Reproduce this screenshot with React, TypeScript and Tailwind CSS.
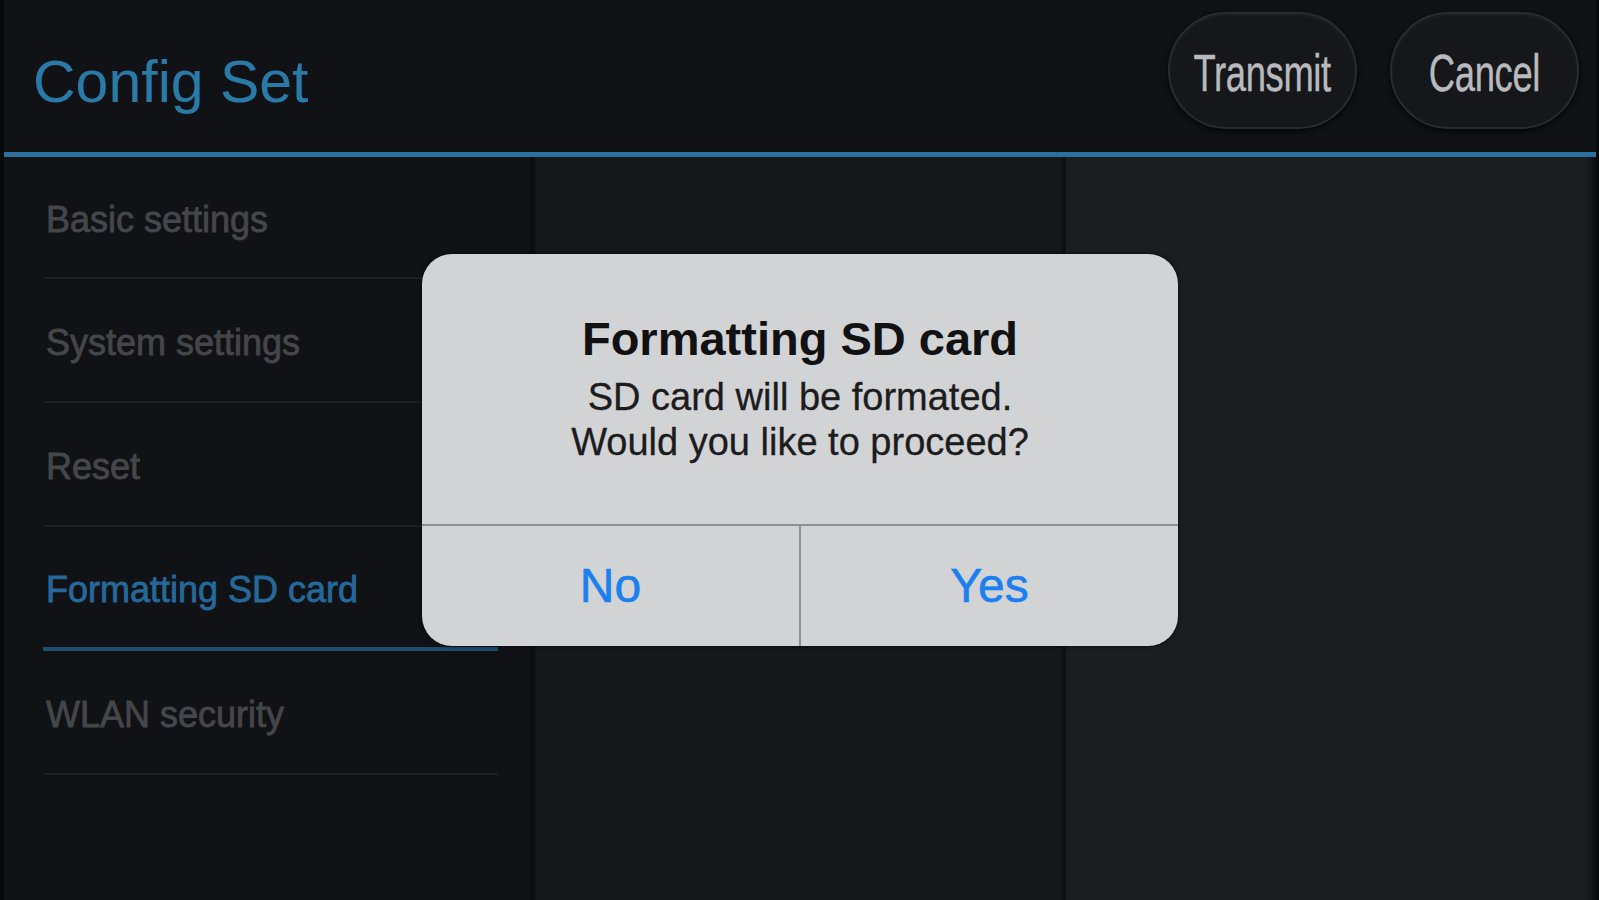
import React from "react";

const items = [
  { label: "Basic settings", active: false },
  { label: "System settings", active: false },
  { label: "Reset", active: false },
  { label: "Formatting SD card", active: true },
  { label: "WLAN security", active: false },
];

function PillButton({ label }: { label: string }) {
  return (
    <div className="w-[189px] h-[117px] rounded-full bg-[#16171b] border-2 border-[#2a2b30] shadow-[0_2px_6px_rgba(0,0,0,0.8),inset_0_2px_3px_rgba(255,255,255,0.04)] flex items-center justify-center">
      <span className="inline-block scale-x-[0.7] text-[52px] leading-none text-[#b9babd] tracking-[-0.5px] mt-[4px] [-webkit-text-stroke:0.4px_#b9babd]">
        {label}
      </span>
    </div>
  );
}

export default function App() {
  return (
    <div className="relative w-[1599px] h-[900px] overflow-hidden bg-[#111216] flex font-['Liberation_Sans',Arial,sans-serif]">
      <div className="w-[4px] h-full bg-[#08090b]" />
      <div className="flex-1 flex flex-col min-w-0">
        <header className="h-[152px] flex items-start justify-between pt-[12px] pl-[29px] pr-[17px]">
          <h1 className="mt-[41px] text-[59px] leading-none text-[#2a7aa8]">Config Set</h1>
          <div className="flex gap-[33px]">
            <PillButton label="Transmit" />
            <PillButton label="Cancel" />
          </div>
        </header>
        <div className="h-[5px] bg-[#2a70a0]" />
        <div className="flex-1 flex">
          <div className="w-[526px] bg-[#111216] pl-[39px]">
            <ul className="w-[455px]">
              {items.map((it, i) => (
                <li
                  key={it.label}
                  className={
                    (i === 0 ? "h-[122px] " : "h-[124px] ") +
                    (it.active
                      ? "box-border border-b-4 border-[#1e4d6e] flex items-center pt-[6px]"
                      : "box-border border-b-2 border-[#1e1f24] flex items-center pt-[6px]")
                  }
                >
                  <span
                    className={
                      it.active
                        ? "pl-[3px] text-[36px] text-[#25699a] [-webkit-text-stroke:0.8px_#25699a]"
                        : "pl-[3px] text-[36px] text-[#45464a] [-webkit-text-stroke:0.8px_#45464a]"
                    }
                  >
                    {it.label}
                  </span>
                </li>
              ))}
            </ul>
          </div>
          <div className="w-[532px] border-l-[5px] border-[#0d0e11] bg-[#16171b]" />
          <div className="flex-1 border-l-[4px] border-[#0f1013] bg-[linear-gradient(to_right,#1c1d21_calc(100%-10px),#0c0d0f)]" />
        </div>
      </div>
      <div className="w-[3px] h-full bg-[#08090b]" />

      <div className="absolute left-[422px] top-[254px] w-[756px] h-[392px] rounded-[30px] bg-[#d2d3d5] shadow-[0_0_4px_rgba(0,0,0,0.7)] flex flex-col overflow-hidden">
        <div className="h-[270px] flex flex-col items-center pt-[57px]">
          <div className="text-[47px] leading-[56px] font-bold text-[#111113]">Formatting SD card</div>
          <div className="mt-[8px] text-[38px] leading-[45px] text-[#1c1c1e] text-center [-webkit-text-stroke:0.3px_#1c1c1e]">
            <div>SD card will be formated.</div>
            <div>Would you like to proceed?</div>
          </div>
        </div>
        <div className="h-[2px] bg-[#8e8f92]" />
        <div className="flex-1 flex">
          <button className="flex-1 flex items-center justify-center text-[48px] text-[#1b7ff0] [-webkit-text-stroke:0.6px_#1b7ff0]">No</button>
          <div className="w-[2px] bg-[#8e8f92]" />
          <button className="flex-1 flex items-center justify-center text-[48px] text-[#1b7ff0] [-webkit-text-stroke:0.6px_#1b7ff0]">Yes</button>
        </div>
      </div>
    </div>
  );
}
